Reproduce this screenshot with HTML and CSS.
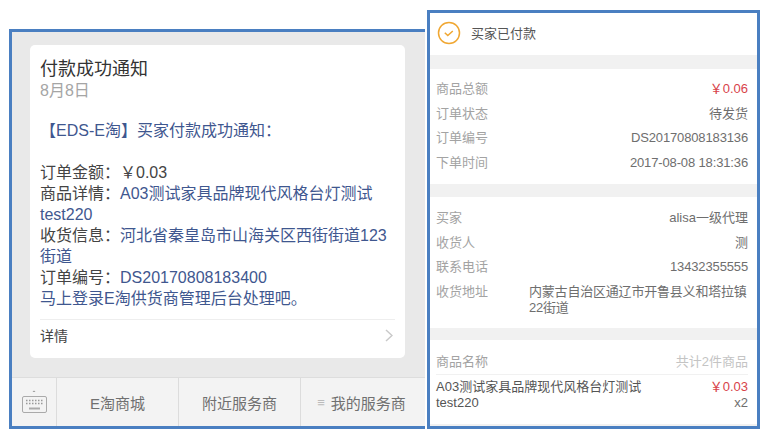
FILE: index.html
```html
<!DOCTYPE html>
<html lang="zh">
<head>
<meta charset="utf-8">
<title>付款成功通知</title>
<link rel="stylesheet" href="styles.css">
</head>
<body>
<div class="page">
  <section class="chat">
    <div class="chat-body">
      <article class="card">
        <h1 class="card-title">付款成功通知</h1>
        <div class="card-date">8月8日</div>
        <p class="lead"><span class="blue">【EDS-E淘】买家付款成功通知：</span></p>
        <div class="lines">
          <div>订单金额：￥0.03</div>
          <div>商品详情：<span class="blue">A03测试家具品牌现代风格台灯测试test220</span></div>
          <div>收货信息：<span class="blue">河北省秦皇岛市山海关区西街街道123街道</span></div>
          <div>订单编号：<span class="blue">DS20170808183400</span></div>
          <div class="blue">马上登录E淘供货商管理后台处理吧。</div>
        </div>
        <div class="more">
          <span>详情</span>
          <svg class="chev" width="8" height="13" viewBox="0 0 8 13"><path d="M1 1l6 5.500-6 5.500" fill="none" stroke="#c9c9c9" stroke-width="1.500"/></svg>
        </div>
      </article>
    </div>
    <nav class="menu">
      <div class="kbd">
        <svg width="28" height="26" viewBox="0 0 28 26">
          <path d="M12.500 3l1.500-1.500 1.500 1.500z" fill="#999"/>
          <rect x="2.500" y="7.500" width="24" height="16" rx="1.500" fill="#f3f3f3" stroke="#aaa"/>
          <path d="M6 11.500h17M6 14.500h17" stroke="#999" stroke-width="1.500" stroke-dasharray="1.500 1.500"/>
          <path d="M9 19.500h11" stroke="#aaa" stroke-width="2"/>
        </svg>
      </div>
      <div class="menu-item">E淘商城</div>
      <div class="menu-item">附近服务商</div>
      <div class="menu-item"><span class="burger">≡</span>我的服务商</div>
    </nav>
  </section>

  <section class="order">
    <header class="status">
      <svg class="status-icon" width="24" height="24" viewBox="0 0 24 24">
        <circle cx="12" cy="12" r="10.500" fill="none" stroke="#f0a732" stroke-width="1.500"/>
        <path d="M7.800 11.800l3 2.800 5-4.600" fill="none" stroke="#f0a732" stroke-width="1.500"/>
      </svg>
      <span>买家已付款</span>
    </header>
    <div class="group g1">
      <div class="row"><span class="label">商品总额</span><span class="red">￥0.06</span></div>
      <div class="row"><span class="label">订单状态</span><span>待发货</span></div>
      <div class="row"><span class="label">订单编号</span><span class="num">DS20170808183136</span></div>
      <div class="row"><span class="label">下单时间</span><span class="num">2017-08-08 18:31:36</span></div>
    </div>
    <div class="group g2">
      <div class="row"><span class="label">买家</span><span>alisa一级代理</span></div>
      <div class="row"><span class="label">收货人</span><span>测</span></div>
      <div class="row"><span class="label">联系电话</span><span class="num">13432355555</span></div>
      <div class="row addr"><span class="label">收货地址</span><span class="addr-text">内蒙古自治区通辽市开鲁县义和塔拉镇22街道</span></div>
    </div>
    <div class="group g3">
      <div class="row head"><span class="label">商品名称</span><span class="light">共计2件商品</span></div>
      <div class="item">
        <span class="item-name">A03测试家具品牌现代风格台灯测试test220</span>
        <span class="item-side"><span class="red">￥0.03</span><span>x2</span></span>
      </div>
    </div>
  </section>
</div>
</body>
</html>
```

FILE: styles.css
```css
* { box-sizing: border-box; }
html, body { margin: 0; padding: 0; background: #fff; }
body {
  width: 760px;
  height: 434px;
  overflow: hidden;
  font-family: "Liberation Sans", "Noto Sans CJK SC", sans-serif;
}
.page {
  display: flex;
  align-items: flex-start;
  padding: 10px 0 0 9px;
}

/* left: chat */
.chat {
  width: 416px;
  height: 400px;
  margin-top: 19px;
  border: 3px solid #4a7fc1;
  border-right-width: 0;
  background: #e9e9e9;
  display: flex;
  flex-direction: column;
}
.chat-body { flex: 1; padding: 13px 0 0 18px; }
.card {
  width: 375px;
  height: 313px;
  background: #fff;
  border-radius: 5px;
  padding: 13px 10px 0;
  color: #444;
}
.card-title { margin: 0; font-size: 18px; line-height: 23px; font-weight: 400; color: #333; }
.card-date { font-size: 16px; line-height: 20px; color: #a5a5a5; }
.lead { margin: 19px 0 21px; font-size: 16px; line-height: 21px; }
.lines { font-size: 16px; line-height: 21px; width: 352px; }
.blue { color: #3f578f; }
.more {
  margin-top: 10px;
  height: 31px;
  border-top: 1px solid #eee;
  display: flex;
  justify-content: space-between;
  align-items: center;
  font-size: 14px;
  color: #444;
}
.chev { margin-right: 2px; }
.menu {
  height: 49px;
  background: #f3f3f3;
  border-top: 1px solid #ddd;
  display: flex;
}
.kbd { width: 44px; display: flex; align-items: center; justify-content: center; }
.menu-item {
  width: 122px;
  border-left: 1px solid #dcdcdc;
  display: flex;
  align-items: center;
  justify-content: center;
  font-size: 15px;
  color: #707070;
}
.burger { color: #bbb; margin-right: 6px; font-size: 13px; }

/* right: order */
.order {
  width: 333px;
  height: 419px;
  margin-left: 2px;
  border: 3px solid #4a7fc1;
  background: #f1f1f1;
  display: flex;
  flex-direction: column;
  font-size: 13px;
  color: #6e6e6e;
}
.status {
  height: 42px;
  background: #fff;
  display: flex;
  align-items: center;
  gap: 10px;
  padding: 0 0 4px 7px;
  font-size: 13px;
  color: #555;
}
.status-icon { margin-top: 2px; }
.group { background: #fff; margin-top: 14px; padding: 8px 9px 0 6px; }
.g1 { height: 115px; }
.g2 { height: 131px; margin-top: 13px; padding-top: 9px; }
.g3 { height: 84px; margin-top: 12px; padding-top: 10px; }
.row { display: flex; justify-content: space-between; height: 24.500px; line-height: 24px; }
.label { color: #a3a3a3; }
.num { letter-spacing: -0.14px; }
.red { color: #d8434a; }
.light { color: #c4c4c4; }
.addr { height: auto; line-height: 16px; padding-top: 4px; }
.addr-text { width: 219px; letter-spacing: -0.2px; }
.head { border-bottom: 1px solid #f1f1f1; height: 25px; margin-bottom: 4px; }
.item { display: flex; justify-content: space-between; line-height: 16px; }
.item-name { width: 210px; color: #555; }
.item-side { display: flex; flex-direction: column; align-items: flex-end; }
```
